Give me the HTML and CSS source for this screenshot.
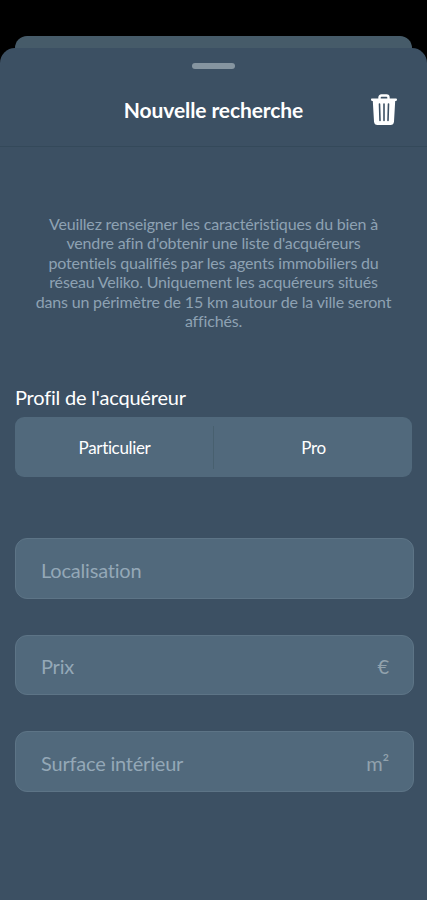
FILE: index.html
```html
<!DOCTYPE html>
<html lang="fr">

<head>
  <meta charset="UTF-8">
  <meta name="viewport" content="width=device-width, initial-scale=1.0">
  <title>Nouvelle recherche</title>
  <link rel="stylesheet" href="styles.css">
</head>

<body>
  <div class="back-sheet"></div>
  <main class="sheet">
    <div class="handle"></div>
    <header class="header">
      <h1>Nouvelle recherche</h1>
      <button class="delete-btn" type="button" aria-label="Supprimer">
        <svg width="28" height="32" viewBox="0 0 28 32">
          <path d="M9.500 5V3.500Q9.500 1.500 11.500 1.500H16.500Q18.500 1.500 18.500 3.500V5" fill="none" stroke="#fff" stroke-width="2.400" />
          <path d="M2 4.500H26Q27 4.500 27 5.600T26 7H25.200L24 27.500Q23.700 31 20.500 31H7.500Q4.300 31 4 27.500L2.800 7H2Q1 7 1 5.600T2 4.500Z" fill="#fff" />
          <path d="M9.500 10L10 26.500M14 10V26.500M18.500 10L18 26.500" fill="none" stroke="#3c5063" stroke-width="1.600" stroke-linecap="round" />
        </svg>
      </button>
    </header>

    <p class="intro">Veuillez renseigner les caractéristiques du bien à<br>
      vendre afin d'obtenir une liste d'acquéreurs<br>
      potentiels qualifiés par les agents immobiliers du<br>
      réseau Veliko. Uniquement les acquéreurs situés<br>
      dans un périmètre de 15 km autour de la ville seront<br>
      affichés.</p>

    <form class="form">
      <h2>Profil de l'acquéreur</h2>
      <div class="profile">
        <button type="button">Particulier</button>
        <span class="separator"></span>
        <button type="button">Pro</button>
      </div>

      <div class="fields">
        <div class="field">
          <span>Localisation</span>
        </div>
        <div class="field">
          <span>Prix</span>
          <span class="unit">€</span>
        </div>
        <div class="field">
          <span>Surface intérieur</span>
          <span class="unit">m²</span>
        </div>
      </div>
    </form>
  </main>
</body>

</html>
```
FILE: styles.css
```css
* {
  box-sizing: border-box;
}

body {
  margin: 0;
  padding-top: 36px;
  height: 900px;
  overflow: hidden;
  background-color: #000;
  font-family: Lato, sans-serif;
  color: #fff;
}

.back-sheet {
  height: 28px;
  margin: 0 15px;
  border-radius: 12px 12px 0 0;
  background-color: #465b69;
}

.sheet {
  position: relative;
  height: 852px;
  margin-top: -16px;
  border-radius: 15px 15px 0 0;
  background-color: #3c5063;
  overflow: hidden;
}

.handle {
  width: 43px;
  height: 6px;
  margin: 15px auto 0;
  border-radius: 3px;
  background-color: #8695a0;
}

.header {
  display: grid;
  grid-template-columns: 1fr auto 1fr;
  align-items: center;
  height: 78px;
  padding: 4px 29px 0;
  border-bottom: 1px solid #34495a;
}

h1 {
  grid-column: 2;
  margin: 0;
  font-size: 21px;
  font-weight: 700;
  letter-spacing: -0.1px;
}

button {
  padding: 0;
  border: none;
  background: none;
  color: inherit;
  font-family: inherit;
  cursor: pointer;
}

.delete-btn {
  justify-self: end;
  height: 32px;
}

.delete-btn svg {
  display: block;
}

.intro {
  margin: 67px 0 0;
  text-align: center;
  font-size: 16px;
  line-height: 19.4px;
  letter-spacing: -0.17px;
  color: #8ea2b3;
}

.form {
  padding: 0 13px 0 15px;
}

h2 {
  margin: 55px 0 0;
  font-size: 20px;
  font-weight: 400;
  line-height: 24px;
  letter-spacing: -0.2px;
}

.profile {
  display: flex;
  align-items: center;
  height: 60px;
  margin: 8px 2px 0 0;
  border-radius: 9px;
  background-color: #51697c;
}

.profile button {
  flex: 1;
  height: 100%;
  padding-left: 1px;
  font-size: 17px;
  letter-spacing: -0.35px;
}

.separator {
  width: 1px;
  height: 43px;
  background-color: #48606f;
}

.fields {
  display: flex;
  flex-direction: column;
  gap: 36px;
  margin-top: 61px;
}

.field {
  display: flex;
  justify-content: space-between;
  align-items: center;
  height: 60.500px;
  padding: 2px 24px 0 25px;
  border: 1px solid #5d7486;
  border-radius: 12px;
  background-color: #51697c;
  font-size: 20px;
  letter-spacing: -0.2px;
  color: #94a8b7;
}

.unit {
  color: #92a2ad;
}
```
